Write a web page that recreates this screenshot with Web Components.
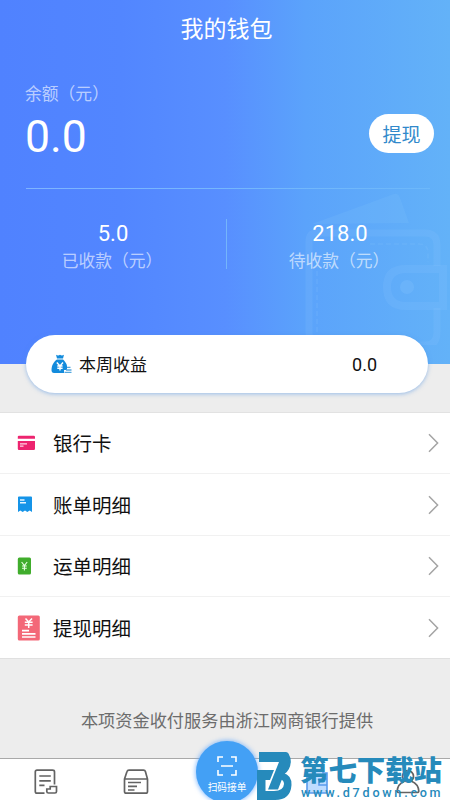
<!DOCTYPE html>
<html lang="zh">
<head>
<meta charset="utf-8">
<title>我的钱包</title>
<style>
body{margin:0;width:450px;height:800px;overflow:hidden;font-family:Roboto,"Noto Sans CJK SC",sans-serif;color:#111}
</style>
</head>
<body>
<wallet-app></wallet-app>
<script>
const define=(name,html)=>customElements.define(name,class extends HTMLElement{
  connectedCallback(){
    const t=document.createElement('template');
    t.innerHTML=html;
    this.attachShadow({mode:'open'}).append(t.content.cloneNode(true));
  }
});

define('money-stat',`<style>
:host{display:flex;flex-direction:column;align-items:center;flex:1;position:relative}
.v{font-size:22px;line-height:28px;color:#fff;padding-top:1px}
.l{font-size:16.8px;line-height:26px;color:rgba(255,255,255,.62);white-space:nowrap;margin-right:2px}
</style><div class="v"><slot></slot></div><div class="l"><slot name="label"></slot></div>`);

define('wallet-art',`<style>:host{display:block}svg{display:block}</style>
<svg width="150" height="160" viewBox="0 0 150 160" fill="none">
<path d="M12 39L94 9Q98 8 100 13L109 38Z" fill="#8ccaff" fill-opacity=".14"/>
<g stroke="#8ccaff" stroke-opacity=".16">
<path d="M137 81V60Q137 48 125 48H16Q9 48 9 57V148Q9 160 22 160H126Q137 160 137 147V123" stroke-width="7"/>
<path d="M143 84H106Q87 84 87 102Q87 121 106 121H143Z" stroke-width="8"/>
<path d="M70 59H119Q128 59 128 68V77M17 70V150" stroke-width="1.5" stroke-dasharray="5 3"/>
</g><circle cx="107" cy="102" r="7" fill="#8ccaff" fill-opacity=".22"/></svg>`);

define('wallet-header',`<style>
:host{display:block;position:relative;box-sizing:border-box;height:364px;background:linear-gradient(90deg,#5082ff 0,#5286ff 27%,#588fff 50%,#5ba3fb 68%,#63b2f8 100%)}
wallet-art{position:absolute;left:300px;top:185px}
.in{position:relative}
h1{margin:0;padding:14px 0 0 3px;text-align:center;font:400 23px/32px Roboto,"Noto Sans CJK SC",sans-serif;color:#fff}
.bal{display:flex;justify-content:space-between;margin:35px 16px 0 25px;height:81px}
.lab{font-size:16.8px;line-height:26px;color:rgba(255,255,255,.62)}
.num{font-size:44.5px;line-height:54px;color:#fff;margin-top:3px}
button{appearance:none;border:0;margin:33px 0 0;padding:4px 0 0;box-sizing:border-box;width:65px;height:39px;border-radius:20px;background:#fff;color:#3189cb;font:400 19px/34px Roboto,"Noto Sans CJK SC",sans-serif}
hr{border:0;height:1px;margin:26px 20px 0 26px;width:404px;background:linear-gradient(90deg,#7fb4ff,#73b7fc 60%,#6cb8fa)}
.stats{display:flex;margin-top:30px;height:50px}
.stats i{flex:none;width:1px;background:#74b5fb}
money-stat{flex:none;width:226px}
</style>
<wallet-art></wallet-art>
<div class="in"><h1>我的钱包</h1>
<div class="bal"><div><div class="lab">余额（元）</div><div class="num">0.0</div></div><button>提现</button></div>
<hr>
<div class="stats"><money-stat>5.0<span slot="label">已收款（元）</span></money-stat><i></i><money-stat>218.0<span slot="label">待收款（元）</span></money-stat></div></div>`);

define('income-card',`<style>
:host{display:flex;align-items:center;position:relative;box-sizing:border-box;width:402px;height:58px;margin:-29px 0 0 26px;padding:0 51px 0 25px;border-radius:29px;background:#fff;box-shadow:0 1px 4px rgba(80,145,225,.55);font-size:17px;color:#111}
svg{margin-right:7px}span{padding-bottom:2px}b{font-weight:400;margin-left:auto;font-size:18px}
</style>
<svg width="21" height="20" viewBox="0 0 21 20"><path d="M5 .7Q7 2 9 .8Q11 2 13 .7L12 4.5H6Z" fill="#138bdc"/><path d="M6 5.5H12C15 8 17 12 16 17Q15.5 19 13 19H3Q.5 19 .5 16C.5 11 3 7.5 6 5.5Z" fill="#138bdc"/><path d="M5.8 8.5L9 12L12 8.5M9 12V16.5M6.3 12H11.6M6.3 14.3H11.6" fill="none" stroke="#fff" stroke-width="1.4"/><path d="M16 12H21V20H13V16H16Z" fill="#fff"/><path d="M16 13.4H19.5M15 16H20.5M13.5 18.4H20.5" stroke="#55a8df" stroke-width="1.4"/></svg>
<span><slot></slot></span><b><slot name="value"></slot></b>`);

define('menu-row',`<style>
:host{display:flex;align-items:center;box-sizing:border-box;height:61.4px;padding:0 11px 0 17px;border-bottom:1px solid #f1f1f1;background:#fff;font-size:19.5px;color:#111}
:host(:last-child){border-bottom:0;height:60.8px}
.i{width:36px;display:flex;align-items:center}
span{padding-bottom:1px}
.a{margin-left:auto;display:block}
</style><div class="i"><slot name="icon"></slot></div><span><slot></slot></span>
<svg class="a" width="11" height="20" viewBox="0 0 11 20"><path d="M1 1.3L9.6 10L1 18.7" fill="none" stroke="#a4a4a4" stroke-width="1.5"/></svg>`);

define('tab-bar',`<style>
:host{display:block;position:relative;box-sizing:border-box;height:42px;border-top:1px solid #a9a9a9;background:#fff}
.tabs{display:flex;padding:10px 0 0 1px}.tabs div{flex:1;display:flex;justify-content:center}
.scan{position:absolute;left:196px;top:-18px;width:62px;height:62px;border-radius:50%;background:#43a0f5;box-shadow:0 0 4px 1px rgba(90,165,255,.65);display:flex;flex-direction:column;align-items:center;color:#fff;font-size:9.7px;line-height:14px}
.scan svg{margin:15px 0 5px}
svg{display:block}
</style>
<div class="tabs">
<div><svg width="24" height="27" viewBox="0 0 24 27" fill="none" stroke="#636363" stroke-width="1.7"><path d="M10.5 24.2H3Q1.3 24.2 1.3 22.5V2.8Q1.3 1.2 3 1.2H18.5Q20.5 1.2 20.5 2.8V15.5M5.3 7H16.8M5.3 11.8H16.8M5.3 16.3H10.5M12.8 20H16.2V17.5H22.5V22.5Q22.5 24 21 24H14.5Q12.8 24 12.8 22.5Z"/></svg></div>
<div><svg width="26" height="27" viewBox="0 0 26 27" fill="none" stroke="#636363" stroke-width="1.7"><path d="M1.5 10L4 2.5Q4.4 1.2 6 1.2H20.5Q22 1.2 22.4 2.5L24.5 10V22.5Q24.5 24.2 22.8 24.2H3.2Q1.5 24.2 1.5 22.5ZM1.5 10H24.5M5 13.5H18M5 17.3H14M5 21H11.5"/></svg></div>
<div></div>
<div><svg width="25" height="26" viewBox="0 0 25 26" style="margin-left:5px"><path d="M2 2H18V4H22V24H2Z" fill="#bedcff" stroke="#5a9bed" stroke-width="1.6"/><path d="M22 10H14V16H22" fill="none" stroke="#5a9bed" stroke-width="1.6"/></svg></div>
<div><svg width="26" height="26" viewBox="0 0 26 26" fill="none" stroke="#636363" stroke-width="1.7" style="margin-left:5px"><circle cx="13" cy="7.2" r="5.5"/><path d="M9.5 12.2C5 14 2.5 17.5 2.2 22Q2.2 23.5 4 23.5H22Q23.8 23.5 23.8 22C23.5 17.5 21 14 16.5 12.2"/></svg></div>
</div>
<div class="scan"><svg width="20" height="20" viewBox="0 0 20 20" fill="none" stroke="#fff" stroke-width="1.6"><path d="M1 6V1H6M14 1H19V6M19 14V19H14M6 19H1V14M4 10H16"/></svg>扫码接单</div>`);

define('site-mark',`<style>
:host{position:absolute;left:256px;top:750px;width:194px;height:50px;display:flex;color:#268abb}
svg{flex:none;margin-right:8px}
.t{font:900 28.4px/30px "Noto Sans CJK SC",sans-serif;white-space:nowrap;margin-top:4px}
.u{font:500 12.6px/14px Roboto,sans-serif;letter-spacing:2.75px;margin:2px 0 0 1px;white-space:nowrap}
</style>
<svg width="36" height="50" viewBox="0 0 36 50" fill="#268abb"><path d="M27 23Q35.8 25 35.5 35Q34.5 50 19 50H1V20H9.5V41H18Q27.5 41 28 34Q28 30.5 24.5 29Z"/><path d="M28 3Q35 3 34.8 12Q34.3 20 28 24.5L27 23L31 12Z"/><path d="M3 2H30Q35 3 32.5 12.5L22 39.5H12L23 12H3Z"/><path d="M1 20H18L14 30H1Z"/></svg>
<div><div class="t">第七下载站</div><div class="u">www.d7down.com</div></div>`);

define('wallet-app',`<style>
:host{display:flex;flex-direction:column;position:relative;width:450px;height:800px;background:#ededed;overflow:hidden}
:host>*{flex:none}
.list{margin-top:19px;border-top:1px solid #e2e2e2;border-bottom:1px solid #e0e0e0;background:#fff}
.foot{flex:1;text-align:center;font-size:17.2px;line-height:26px;padding:49px 0 0 4px;color:#6c6c6c}
svg{display:block}
</style>
<wallet-header></wallet-header>
<income-card>本周收益<span slot="value">0.0</span></income-card>
<div class="list">
<menu-row><svg slot="icon" width="18" height="16" viewBox="0 0 18 16"><path d="M.8 1.5Q.8.8 2 .8H16.8Q18 .8 18 2V3.8H.8ZM.8 6H18V13.8Q18 15 16.8 15H2Q.8 15 .8 13.8Z" fill="#ed246f"/><path d="M3 8.8H10M3 11.2H6.5" stroke="#ffd4e4" stroke-width="1.2"/></svg>银行卡</menu-row>
<menu-row><svg slot="icon" width="16" height="17" viewBox="0 0 16 17"><path d="M1 1Q1 .5 2 .5H14Q15 .5 15 1.5V16L12.7 14.5L10.3 16L8 14.5L5.7 16L3.3 14.5L1 16Z" fill="#1594e8"/><path d="M3 4H7.5M3 6.8H9" stroke="#e5f5ff" stroke-width="1.5"/></svg>账单明细</menu-row>
<menu-row><svg slot="icon" width="15" height="18" viewBox="0 0 15 18"><rect x=".8" y=".5" width="13.2" height="17" rx="1.5" fill="#40ad2c"/><path d="M4.6 5L7.4 8.5L10.2 5M7.4 8.5V13.5M5 9H9.8M5 11.2H9.8" fill="none" stroke="#e8ffe2" stroke-width="1.1"/></svg>运单明细</menu-row>
<menu-row><svg slot="icon" width="24" height="26" viewBox="0 0 24 26"><rect x=".8" y=".5" width="22" height="25" rx="1.5" fill="#f36878"/><path d="M8.5 3.5L11.7 7L15 3.5M11.7 7V13M7.8 7.3H15.6M7.8 10H15.6" fill="none" stroke="#fff" stroke-width="1.5"/><path d="M5 15.7H12M5 18.8H18.5M5 22H18.5" stroke="#fff" stroke-width="1.7"/></svg>提现明细</menu-row>
</div>
<div class="foot">本项资金收付服务由浙江网商银行提供</div>
<tab-bar></tab-bar>
<site-mark></site-mark>`);
</script>
</body>
</html>
